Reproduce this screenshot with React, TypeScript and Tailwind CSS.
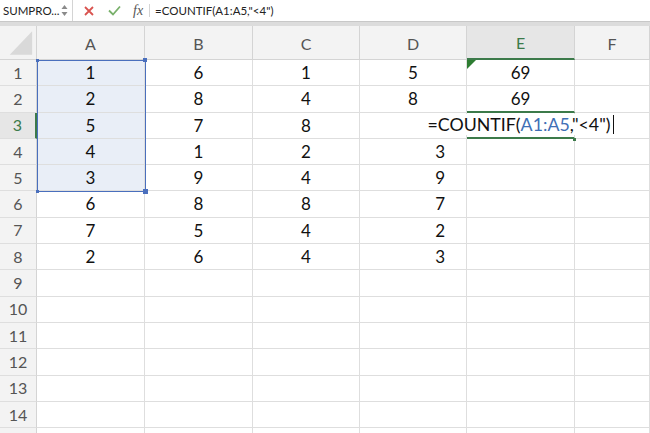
import React from "react";

const colW = ["w-[108px]", "w-[108px]", "w-[107px]", "w-[107px]", "w-[108px]"];
const letters = ["A", "B", "C", "D", "E", "F"];

type Cell = string | null;
const data: Cell[][] = [
  ["1", "6", "1", "5", "69"],
  ["2", "8", "4", "8", "69"],
  ["5", "7", "8", null, null],
  ["4", "1", "2", "3", null],
  ["3", "9", "4", "9", null],
  ["6", "8", "8", "7", null],
  ["7", "5", "4", "2", null],
  ["2", "6", "4", "3", null],
];

function FormulaBar() {
  return (
    <div className="flex h-[22px] items-center border-b border-[#c8c8c8] bg-white text-[11.5px] text-[#222]">
      <div className="flex h-full w-[73px] items-center justify-between border-r border-[#d4d4d4] pl-[3px] pr-[4px]">
        <span>SUMPRO...</span>
        <svg width="7" height="13" viewBox="0 0 7 13">
          <path d="M3.5 1 L6.5 5 L0.5 5 Z" fill="#8a8a8a" />
          <path d="M3.5 12 L6.5 8 L0.5 8 Z" fill="#8a8a8a" />
        </svg>
      </div>
      <div className="ml-[10px] flex h-full items-center">
        <svg width="12" height="12" viewBox="0 0 12 12">
          <path d="M2 2 L10 10 M10 2 L2 10" stroke="#d9534f" strokeWidth="1.8" />
        </svg>
      </div>
      <div className="ml-[13px] flex h-full items-center">
        <svg width="13" height="11" viewBox="0 0 13 11">
          <path d="M1 5.5 L5 9.5 L12 1.5" stroke="#78b06a" strokeWidth="1.8" fill="none" />
        </svg>
      </div>
      <span className="ml-[12px] text-[14px] italic text-[#555]" style={{ fontFamily: '"Liberation Serif", serif' }}>
        fx
      </span>
      <div className="ml-[6px] h-[13px] w-px bg-[#d4d4d4]" />
      <span className="ml-[5px]">=COUNTIF(A1:A5,"&lt;4")</span>
    </div>
  );
}

function HeaderRow() {
  return (
    <div className="flex h-[34px]">
      <div className="flex w-[37px] shrink-0 items-end justify-end border-r border-b border-[#d4d4d4] bg-[#f3f3f3]">
        <svg width="37" height="33" viewBox="0 0 37 33">
          <path d="M10 29 L33 29 L33 5 Z" fill="#d9d9d9" />
        </svg>
      </div>
      {letters.map((l, i) => {
        const isE = l === "E";
        const w = i < 5 ? colW[i] : "flex-1";
        return (
          <div
            key={l}
            className={`${w} flex shrink-0 items-center justify-center border-r ${
              isE ? "border-b-2 border-b-[#3c7a4a] bg-[#e6e6e6] text-[#3c7a4a]" : "border-b border-b-[#d4d4d4] bg-[#f3f3f3] text-[#555]"
            } border-r-[#d4d4d4] pt-[2px] text-[16px]`}
          >
            {l}
          </div>
        );
      })}
    </div>
  );
}

function Row({ n }: { n: number }) {
  const r = data[n - 1];
  const is3 = n === 3;
  return (
    <div className="flex h-[26.3px]">
      <div
        className={`flex w-[37px] shrink-0 items-center justify-center border-b border-[#dedede] text-[16px] ${
          is3 ? "border-r-2 border-r-[#3c7a4a] bg-[#e6e6e6] text-[#3c7a4a]" : "border-r border-r-[#d4d4d4] bg-[#f3f3f3] text-[#555]"
        }`}
      >
        {n <= 14 ? n : null}
      </div>
      {[0, 1, 2, 3, 4, 5].map((c) => {
        const w = c < 5 ? colW[c] : "flex-1";
        const v = r ? r[c] ?? null : null;
        const inSel = c === 0 && n <= 5;
        const isE = c === 4;
        const green = isE && (n === 2 || n === 3);
        const dRight = c === 3 && n >= 4;
        return (
          <div
            key={c}
            className={`${w} relative flex shrink-0 items-center ${
              dRight ? "justify-end pr-[21px]" : "justify-center"
            } border-r border-r-[#dedede] ${green ? "border-b-2 border-b-[#3c7a4a]" : "border-b border-b-[#dedede]"} ${
              inSel ? "bg-[#e9eef7]" : "bg-white"
            } text-[17px] text-[#111]`}
          >
            {v}
            {isE && n === 1 && (
              <svg className="absolute left-0 top-0" width="9" height="9" viewBox="0 0 9 9">
                <path d="M0 0 L9 0 L0 9 Z" fill="#2e7d32" />
              </svg>
            )}
            {isE && n === 3 && (
              <span className="relative z-10 flex h-[21px] items-center whitespace-nowrap bg-white px-[1px] text-[17.8px] leading-[21px]">
                =COUNTIF(<span className="text-[#3f6fb5]">A1:A5</span>,"&lt;4")
                <span className="ml-[2px] inline-block h-[19px] w-px bg-[#111]" />
              </span>
            )}
          </div>
        );
      })}
    </div>
  );
}

export default function App() {
  return (
    <div
      className="h-[433px] w-[650px] overflow-hidden bg-white"
      style={{ fontFamily: 'Lato, "Open Sans", sans-serif' }}
    >
      <FormulaBar />
      <div className="h-[4px] bg-[#dcdcdc]" />
      <HeaderRow />
      <div className="relative">
        {Array.from({ length: 15 }, (_, i) => (
          <Row key={i} n={i + 1} />
        ))}
        {/* selection A1:A5 */}
        <div className="pointer-events-none absolute left-[37px] top-0 h-[132px] w-[109px] border border-[#4a6fbd]" />
        <div className="absolute left-[36px] top-[-1px] h-[3px] w-[3px] bg-[#4a6fbd]" />
        <div className="absolute left-[143px] top-[-2px] h-[4px] w-[4px] bg-[#4a6fbd]" />
        <div className="absolute left-[36px] top-[130px] h-[3px] w-[3px] bg-[#4a6fbd]" />
        <div className="absolute left-[143px] top-[129px] h-[5px] w-[5px] bg-[#4a6fbd]" />
        <div className="absolute left-[573px] top-[78px] h-[3px] w-[3px] bg-[#3c7a4a]" />
      </div>
    </div>
  );
}
